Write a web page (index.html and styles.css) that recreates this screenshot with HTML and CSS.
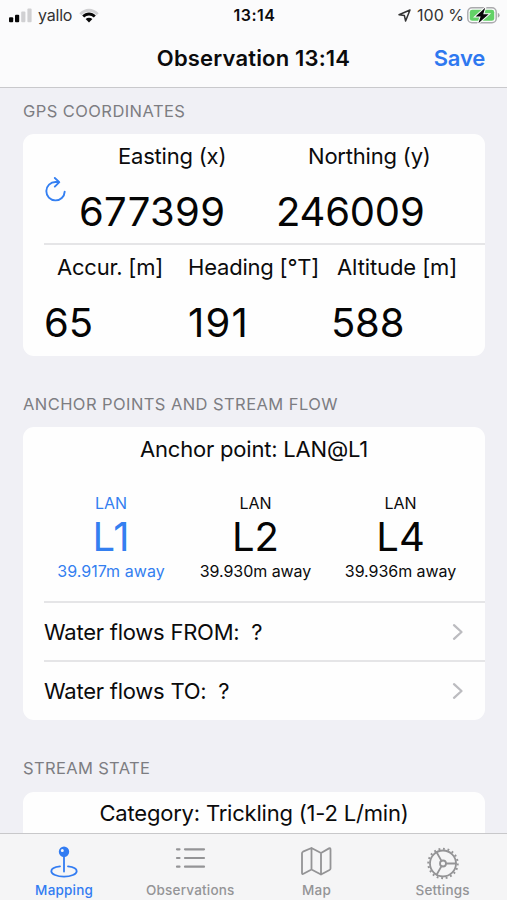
FILE: index.html
```html
<!DOCTYPE html>
<html lang="en">
<head>
<meta charset="utf-8">
<title>Observation 13:14</title>
<link rel="stylesheet" href="styles.css">
</head>
<body>
<div class="screen">
  <header class="top">
    <div class="status">
      <div class="status-left">
        <svg class="signal" width="23" height="15" viewBox="0 0 23 15"><rect x="0" y="9.3" width="4.2" height="5" rx="1"/><rect x="6" y="6.8" width="4.2" height="7.5" rx="1"/><rect class="off" x="12.2" y="3.5" width="4.2" height="10.8" rx="1"/><rect class="off" x="18.4" y="0.5" width="4.2" height="13.8" rx="1"/></svg>
        <span class="carrier">yallo</span>
        <svg class="wifi" width="20" height="15" viewBox="0 0 20 15"><path class="off" d="M0.3 5.2C5.8-.8 14.2-.8 19.7 5.2L17.6 7.2C13.2 2.6 6.8 2.6 2.4 7.2Z"/><path d="M3.2 7.4C7 3.5 13 3.5 16.8 7.4L14.8 9.4C12 6.7 8 6.7 5.2 9.4Z"/><path d="M6.6 11C8.6 9.2 11.4 9.2 13.4 11L10 14.4Z"/></svg>
      </div>
      <span class="clock">13:14</span>
      <div class="status-right">
        <svg class="arrow" width="13" height="13" viewBox="0 0 13 13"><path d="M12 1L1 5.8L6.4 6.6L7.6 12Z"/></svg>
        <span class="percent">100 %</span>
        <svg class="battery" width="33" height="17" viewBox="0 0 33 17"><rect class="shell" x=".8" y=".8" width="28.4" height="15" rx="4.2"/><rect class="charge" x="2.8" y="2.8" width="24.4" height="11" rx="2.4"/><path class="nub" d="M30.8 5.8Q32.6 6.4 32.6 8.3T30.8 10.8Z"/><path class="bolt" d="M18.2 .8L8.6 9.6H13.6L11.4 16.2L21.6 7.2H16.2Z"/></svg>
      </div>
    </div>
    <div class="nav"><h1>Observation 13:14</h1><a class="save">Save</a></div>
  </header>

  <main class="content">
    <h2>GPS COORDINATES</h2>
    <section class="card">
      <div class="coords">
        <svg class="refresh" width="24" height="26" viewBox="0 0 24 26"><path d="M11.5 5A9.2 9.2 0 1 0 20.7 14.6M11.5 5H14.5M10.8 1L15.3 5.1L10.8 9.6"/></svg>
        <div class="coord east"><span class="label">Easting (x)</span><span class="big">677399</span></div>
        <div class="coord north"><span class="label">Northing (y)</span><span class="big">246009</span></div>
      </div>
      <div class="metrics">
        <div class="metric accuracy"><span class="label">Accur. [m]</span><span class="big">65</span></div>
        <div class="metric heading"><span class="label">Heading [°T]</span><span class="big">191</span></div>
        <div class="metric altitude"><span class="label">Altitude [m]</span><span class="big">588</span></div>
      </div>
    </section>

    <h2>ANCHOR POINTS AND STREAM FLOW</h2>
    <section class="card">
      <p class="caption anchor-title">Anchor point: LAN@L1</p>
      <div class="anchors">
        <div class="anchor selected"><span class="site">LAN</span><span class="big">L1</span><span class="distance">39.917m away</span></div>
        <div class="anchor"><span class="site">LAN</span><span class="big">L2</span><span class="distance">39.930m away</span></div>
        <div class="anchor"><span class="site">LAN</span><span class="big">L4</span><span class="distance">39.936m away</span></div>
      </div>
      <div class="row"><span class="row-text">Water flows FROM:&nbsp; ?</span><svg class="chevron" width="12" height="18" viewBox="0 0 12 18"><path d="M2 2.2L9.5 9L2 15.8"/></svg></div>
      <div class="row"><span class="row-text">Water flows TO:&nbsp; ?</span><svg class="chevron" width="12" height="18" viewBox="0 0 12 18"><path d="M2 2.2L9.5 9L2 15.8"/></svg></div>
    </section>

    <h2 class="state-title">STREAM STATE</h2>
    <section class="card"><p class="caption category">Category: Trickling (1-2 L/min)</p></section>
  </main>

  <nav class="tabs">
    <a class="tab active">
      <svg width="30" height="34" viewBox="0 0 30 34"><path class="line" d="M11 19.4C5.5 20 2.3 21.8 2.3 24.2C2.3 27.2 8 29.6 15 29.6S27.7 27.2 27.7 24.2C27.7 21.8 24.5 20 19 19.4"/><path class="line" d="M15 9V24.5"/><path class="solid" fill-rule="evenodd" d="M15 -.4A5.2 5.2 0 1 1 15 10A5.2 5.2 0 1 1 15 -.4ZM13.3 2A1.5 1.5 0 1 0 13.3 5A1.5 1.5 0 1 0 13.3 2Z"/></svg>
      <span>Mapping</span>
    </a>
    <a class="tab">
      <svg width="30" height="34" viewBox="0 0 30 34"><path class="line list" d="M2 2.3H4.5M10 2.3H29M2 11H4.5M10 11H29M2 19.7H4.5M10 19.7H29"/></svg>
      <span>Observations</span>
    </a>
    <a class="tab">
      <svg width="30" height="34" viewBox="0 0 30 34"><path class="line" d="M1 6.2Q1 5.2 2 4.7L10.5 1L20 6L28 1.4Q29.5 .8 29.5 2.4V21.5Q29.5 22.5 28.5 23L20 27.5L10.5 22.5L2.5 26.8Q1 27.5 1 25.8ZM10.5 1V22.5M20 6V27.5"/></svg>
      <span>Map</span>
    </a>
    <a class="tab">
      <svg width="32" height="34" viewBox="0 0 32 34"><circle class="line" cx="16" cy="16.5" r="13"/><circle class="teeth" cx="16" cy="16.5" r="14.7" pathLength="200"/><circle class="line" cx="16" cy="16.5" r="3"/><path class="line" d="M19 16.5H28.7M14.5 13.9L9.6 5.3M14.5 19.1L9.6 27.7"/></svg>
      <span>Settings</span>
    </a>
  </nav>
</div>
</body>
</html>
```
FILE: styles.css
```css
* { box-sizing: border-box; }
body { margin: 0; font-family: Inter, "Liberation Sans", sans-serif; color: #0b0b0c; }
svg { display: block; flex: none; fill: none; overflow: visible; }
h1, h2, p { margin: 0; font-weight: 400; }
.screen { width: 507px; height: 900px; display: flex; flex-direction: column; overflow: hidden; background: #f0f0f5; }

.top { height: 88px; flex: none; background: #fbfbfc; border-bottom: 1px solid #c9c9cc; }
.status { height: 30px; display: grid; grid-template-columns: 1fr auto 1fr; align-items: center; padding: 0 7px 0 9px; font-size: 16px; line-height: 30px; }
.status-left, .status-right { display: flex; align-items: center; }
.status-right { justify-content: flex-end; }
.signal, .wifi { fill: #080808; }
.off { fill: #d0d0d2; }
.carrier { margin: 0 7px 0 6px; color: #333; letter-spacing: -.2px; }
.clock { font-weight: 600; font-size: 16px; letter-spacing: .5px; }
.arrow { margin-right: 6px; stroke: #333; stroke-width: 1.5; stroke-linejoin: round; }
.percent { margin-right: 3px; color: #333; }
.shell { stroke: #aaaaad; stroke-width: 1.4; }
.charge { fill: #63d267; }
.nub { fill: #aaaaad; }
.bolt { fill: #080808; stroke: #fbfbfc; stroke-width: 2; paint-order: stroke; }
.nav { height: 56px; display: grid; grid-template-columns: 1fr auto 1fr; align-items: center; padding: 0 22px; }
h1 { grid-column: 2; font-size: 22px; font-weight: 600; letter-spacing: .17px; }
.save { justify-self: end; font-size: 22px; font-weight: 600; color: #2e78f0; letter-spacing: -.2px; }

.content { flex: 1; min-height: 0; overflow: hidden; padding: 0 22px 0 23px; }
h2 { font-size: 16.5px; line-height: 24px; color: #7d7d82; white-space: nowrap; margin: 36px 0 11px; letter-spacing: .43px; }
h2:first-child { margin-top: 11px; }
.card { background: #fefefe; border-radius: 11px; overflow: hidden; }
.label, .caption, .row-text { font-size: 22px; line-height: 28px; white-space: nowrap; letter-spacing: -.2px; }
.big { font-size: 40px; line-height: 48px; white-space: nowrap; color: #050505; }

.coords { display: grid; grid-template-columns: 35px 198px 1fr; height: 109px; margin-left: 21px; padding-top: 8px; }
.refresh { margin-top: 35px; stroke: #3580f2; stroke-width: 1.9; stroke-linecap: round; stroke-linejoin: round; }
.coord, .metric { display: flex; flex-direction: column; }
.coord { gap: 18px; }
.east .label { margin-left: 39px; }
.east .big { letter-spacing: .3px; }
.north .label { margin-left: 31px; }
.north .big { margin-left: -1px; letter-spacing: -.2px; }
.metrics { display: grid; grid-template-columns: repeat(3, 144px); height: 113px; margin-left: 21px; padding-top: 8px; border-top: 2px solid #e5e5e7; }
.metric { gap: 18px; }
.accuracy .label { margin-left: 13px; }
.altitude .label { margin-left: 5px; letter-spacing: -.1px; }
.heading .big { letter-spacing: 1.2px; }
.altitude .big { margin-left: -1px; letter-spacing: -.2px; }

.caption { text-align: center; }
.anchor-title { padding-top: 8px; }
.anchors { display: grid; grid-template-columns: repeat(3, 145px); height: 138px; padding: 31px 0 0 15px; }
.anchor { display: flex; flex-direction: column; align-items: center; }
.site { font-size: 16px; line-height: 18px; }
.anchor .big { line-height: 50px; }
.distance { font-size: 16px; line-height: 18px; white-space: nowrap; letter-spacing: -.05px; }
.selected { padding-left: 1px; }
.selected .distance { letter-spacing: .05px; }
.selected, .selected .big { color: #347ff0; }
.row { height: 59px; margin-left: 21px; padding-right: 21px; display: flex; align-items: center; justify-content: space-between; border-top: 2px solid #e5e5e7; }
.row:last-child { height: 60px; }
.row-text { letter-spacing: -.24px; }
.chevron { stroke: #bcbcc0; stroke-width: 2.3; stroke-linecap: round; stroke-linejoin: round; }
.state-title { margin-bottom: 12px; letter-spacing: .35px; }
.category { padding: 7px 0 30px; }

.tabs { height: 67px; flex: none; display: grid; grid-template-columns: repeat(4, 126.2px); padding-left: 1px; background: #f5f5f6; border-top: 1px solid #c8c8ca; }
.tab { display: flex; flex-direction: column; align-items: center; padding-top: 13px; color: #949496; font-size: 13.5px; line-height: 18px; font-weight: 500; letter-spacing: .2px; }
.line { stroke: currentColor; stroke-width: 1.8; stroke-linejoin: round; stroke-linecap: round; }
.list { stroke-width: 2.2; }
.solid { fill: currentColor; }
.teeth { stroke: currentColor; stroke-width: 2; stroke-dasharray: 4 6; }
.active { color: #327cf2; }
```
